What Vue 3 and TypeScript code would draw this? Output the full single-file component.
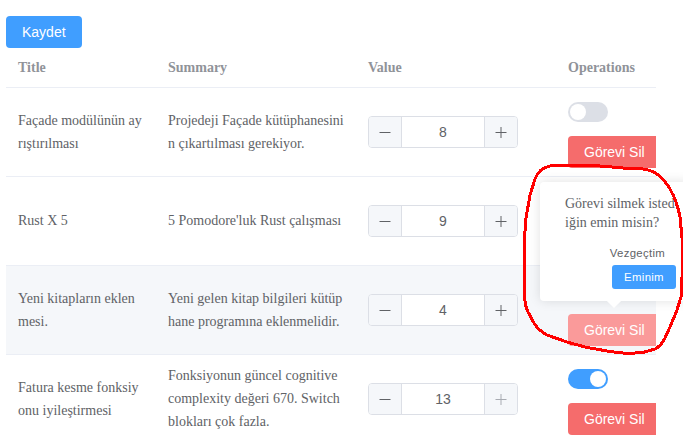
<script setup lang="ts">
import { ref } from 'vue'

interface Task {
  title: string[]
  summary: string[]
  value: number
  done: boolean
  confirming?: boolean
  covered?: boolean
}

const MAX_VALUE = 13

const tasks = ref<Task[]>([
  {
    title: ['Façade modülünün ay', 'rıştırılması'],
    summary: ['Projedeji Façade kütüphanesini', 'n çıkartılması gerekiyor.'],
    value: 8,
    done: false,
  },
  {
    title: ['Rust X 5'],
    summary: ["5 Pomodore'luk Rust çalışması"],
    value: 9,
    done: false,
    covered: true,
  },
  {
    title: ['Yeni kitapların eklen', 'mesi.'],
    summary: ['Yeni gelen kitap bilgileri kütüp', 'hane programına eklenmelidir.'],
    value: 4,
    done: false,
    confirming: true,
  },
  {
    title: ['Fatura kesme fonksiy', 'onu iyileştirmesi'],
    summary: ['Fonksiyonun güncel cognitive', 'complexity değeri 670. Switch', 'blokları çok fazla.'],
    value: 13,
    done: true,
  },
])

function step(task: Task, delta: number) {
  task.value = Math.min(MAX_VALUE, Math.max(0, task.value + delta))
}
</script>

<template>
  <main class="page">
    <button class="btn primary">Kaydet</button>
    <div class="table">
      <div class="row head">
        <div class="cell">Title</div>
        <div class="cell">Summary</div>
        <div class="cell">Value</div>
        <div class="cell">Operations</div>
      </div>
      <div v-for="(task, i) in tasks" :key="i" class="row" :class="{ hover: task.confirming }">
        <div class="cell lines"><div v-for="line in task.title" :key="line">{{ line }}</div></div>
        <div class="cell lines"><div v-for="line in task.summary" :key="line">{{ line }}</div></div>
        <div class="cell">
          <div class="number">
            <button class="step" @click="step(task, -1)">
              <svg viewBox="0 0 14 14" width="14" height="14"><path d="M1.5 7.5H12.5" /></svg>
            </button>
            <span class="amount">{{ task.value }}</span>
            <button class="step" :class="{ disabled: task.value >= MAX_VALUE }" @click="step(task, 1)">
              <svg viewBox="0 0 14 14" width="14" height="14"><path d="M1.5 7.5H12.5M7 2V13" /></svg>
            </button>
          </div>
        </div>
        <div v-if="!task.covered" class="cell operations">
          <div class="switch-line">
            <span class="switch" :class="{ on: task.done }" @click="task.done = !task.done"></span>
          </div>
          <button class="btn danger" :class="{ active: task.confirming }">Görevi Sil</button>
        </div>
      </div>
    </div>

    <div class="popover">
      <div class="question"><div>Görevi silmek isted</div><div>iğin emin misin?</div></div>
      <div class="actions">
        <button class="small text">Vezgeçtim</button>
        <button class="small confirm">Eminim</button>
      </div>
    </div>

    <svg class="marker" viewBox="0 0 683 441" width="683" height="441">
      <path d="M524.5 265 L524.5 238 L526 218 L530 195 L535 179 Q539 168 550 166 L577 165.3 L600 166 L623 168 L643 169 Q651 170 657 174 Q665 180 670 189 Q677 201 680 217 L682 238 L682 277 L681 297 L677 310 L670 327 L665 338 Q661 346 655 349 L643 352.5 L627 353.5 L610 351.5 L587 347.5 L567 342 L547 335 Q538 330 534 323 L528 312 Q525 306 524.5 298 Z" />
    </svg>
  </main>
</template>

<style>
body {
  background: #fff;
  overflow: hidden;
}
</style>

<style scoped>
.page {
  position: relative;
  box-sizing: border-box;
  width: 683px;
  height: 441px;
  padding: 16px 0 0 6px;
  overflow: hidden;
  font-family: 'Liberation Serif', serif;
  font-size: 14px;
  color: #606266;
}
button {
  border: 0;
  margin: 0;
  font-family: 'Liberation Sans', sans-serif;
  cursor: pointer;
}
.btn {
  display: block;
  flex: none;
  height: 32px;
  padding: 0 16px;
  border-radius: 4px;
  font-size: 14px;
  line-height: 32px;
  color: #fff;
  white-space: nowrap;
}
.primary {
  background: #409eff;
}
.danger {
  background: #f56c6c;
}
.danger.active {
  background: #fa9a9a;
}
.table {
  width: 650px;
  overflow: hidden;
}
.row {
  display: grid;
  grid-template-columns: 150px 200px 200px 120px;
  align-items: center;
  box-sizing: border-box;
  width: 670px;
  height: 89px;
  border-bottom: 1px solid #ebeef5;
  line-height: 23px;
}
.head {
  height: 40px;
  font-weight: bold;
  color: #909399;
}
.hover {
  background: #f5f7fa;
}
.cell {
  padding: 0 12px;
  white-space: nowrap;
}
.lines {
  padding-bottom: 1px;
}
.number {
  display: flex;
  box-sizing: border-box;
  width: 150px;
  height: 32px;
  border: 1px solid #dcdfe6;
  border-radius: 4px;
  overflow: hidden;
  background: #fff;
}
.step {
  display: flex;
  align-items: center;
  justify-content: center;
  width: 33px;
  padding: 0;
  background: #f5f7fa;
  border-right: 1px solid #dcdfe6;
}
.step:last-child {
  border-right: 0;
  border-left: 1px solid #dcdfe6;
}
.step path {
  fill: none;
  stroke: #606266;
  stroke-width: 1;
}
.step.disabled path {
  stroke: #a8abb2;
}
.amount {
  flex: 1;
  font: 14px/30px 'Liberation Sans', sans-serif;
  text-align: center;
}
.operations {
  display: flex;
  flex-direction: column;
  align-items: flex-start;
  gap: 8px;
}
.switch-line {
  display: flex;
  align-items: center;
  height: 32px;
}
.switch {
  display: flex;
  box-sizing: border-box;
  width: 40px;
  height: 20px;
  padding: 2px;
  border-radius: 10px;
  background: #dcdfe6;
}
.switch::after {
  content: '';
  width: 16px;
  height: 16px;
  border-radius: 50%;
  background: #fff;
}
.switch.on {
  justify-content: flex-end;
  background: #409eff;
}
.popover {
  position: absolute;
  left: 540px;
  top: 182px;
  box-sizing: border-box;
  width: 150px;
  height: 119px;
  padding: 12px 14px 12px 25px;
  border-radius: 4px;
  background: #fff;
  box-shadow: 0 0 12px rgba(0, 0, 0, 0.12);
}
.popover::after {
  content: '';
  position: absolute;
  left: 69px;
  bottom: -5px;
  width: 10px;
  height: 10px;
  background: #fff;
  transform: rotate(45deg);
}
.question {
  line-height: 19px;
  white-space: nowrap;
}
.actions {
  display: flex;
  flex-direction: column;
  align-items: flex-end;
  margin-top: 9px;
}
.small {
  height: 24px;
  padding: 0 12px;
  border-radius: 3px;
  font-size: 11.4px;
  letter-spacing: 0.3px;
  line-height: 24px;
}
.text {
  padding-right: 11px;
  background: none;
  color: #606266;
}
.confirm {
  width: 64px;
  background: #409eff;
  color: #fff;
}
.marker {
  position: absolute;
  inset: 0;
  pointer-events: none;
}
.marker path {
  fill: none;
  stroke: #f00;
  stroke-width: 3;
  stroke-linejoin: round;
  shape-rendering: crispEdges;
}
</style>
